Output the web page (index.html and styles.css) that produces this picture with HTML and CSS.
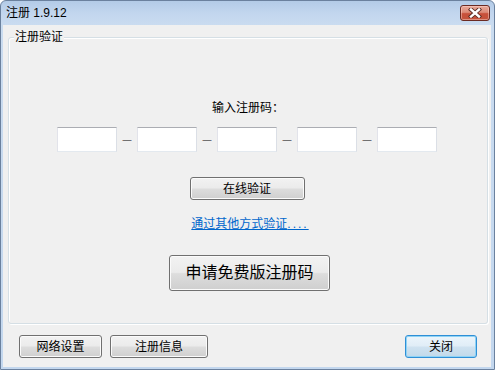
FILE: index.html
```html
<!DOCTYPE html>
<html lang="zh-CN">
<head>
<meta charset="utf-8">
<title>注册 1.9.12</title>
<link rel="stylesheet" href="styles.css">
</head>
<body>
<div class="window">
  <div class="titlebar">
    <span class="title">注册 1.9.12</span>
    <button class="close-btn" aria-label="关闭">
      <svg width="14" height="10" viewBox="0 0 14 10">
        <path d="M3 1.5 L11 8.5 M11 1.5 L3 8.5" stroke="#5b2a22" stroke-width="4.2" stroke-linecap="square" fill="none"/>
        <path d="M3 1.5 L11 8.5 M11 1.5 L3 8.5" stroke="#ffffff" stroke-width="2.4" stroke-linecap="square" fill="none"/>
      </svg>
    </button>
  </div>
  <div class="client">
    <div class="group">
      <span class="group-label">注册验证</span>
      <div class="prompt">输入注册码：</div>
      <div class="code-row">
        <input class="code" type="text">
        <span class="dash">—</span>
        <input class="code" type="text">
        <span class="dash">—</span>
        <input class="code" type="text">
        <span class="dash">—</span>
        <input class="code" type="text">
        <span class="dash">—</span>
        <input class="code" type="text">
      </div>
      <button class="btn btn-verify">在线验证</button>
      <a class="link" href="#">通过其他方式验证<span class="dots">....</span></a>
      <button class="btn btn-big">申请免费版注册码</button>
    </div>
    <div class="footer">
      <button class="btn btn-net">网络设置</button>
      <button class="btn btn-info">注册信息</button>
      <span class="spacer"></span>
      <button class="btn btn-default btn-close">关闭</button>
    </div>
  </div>
</div>
</body>
</html>
```
FILE: styles.css
```css
html, body {
  margin: 0;
  padding: 0;
  background: #ffffff;
}
body {
  font-family: "Liberation Sans", "Noto Sans CJK SC", sans-serif;
  font-size: 12px;
  color: #000;
}
.window {
  width: 495px;
  height: 370px;
  box-sizing: border-box;
  border: 1px solid #6b819e;
  border-radius: 6px 6px 0 0;
  background: linear-gradient(#b3cbe7 0px, #c2d6ee 12px, #cadcf0 24px, #c3d7ee 100%);
  padding: 0 3px 2px 2px;
  display: flex;
  flex-direction: column;
}
.titlebar {
  height: 24px;
  display: flex;
  align-items: center;
  justify-content: space-between;
  padding-left: 3px;
  flex: none;
}
.title {
  font-size: 12px;
  line-height: 16px;
  color: #000;
}
.close-btn {
  width: 30px;
  height: 16px;
  margin-right: 1px;
  padding: 0;
  border: 1px solid #6b2a22;
  border-radius: 3px;
  background: linear-gradient(#e9a899 0%, #dc8b78 45%, #c8503a 55%, #c3533c 100%);
  box-shadow: inset 0 0 0 1px rgba(255, 220, 210, 0.45);
  display: flex;
  align-items: center;
  justify-content: center;
}
.client {
  flex: 1;
  background: #f0f0f0;
  display: flex;
  flex-direction: column;
}
.group {
  position: relative;
  margin: 12px 3px 0 5px;
  height: 287px;
  box-sizing: border-box;
  border: 1px solid #d5dfe5;
  border-radius: 3px;
  box-shadow: inset 1px 1px 0 #ffffff, 1px 1px 0 #ffffff;
  display: flex;
  flex-direction: column;
  align-items: center;
  padding-top: 62px;
}
.group-label {
  position: absolute;
  left: 5px;
  top: -9px;
  padding: 0 1px;
  background: #f0f0f0;
  line-height: 16px;
}
.prompt {
  line-height: 16px;
  height: 16px;
}
.code-row {
  margin-top: 11px;
  margin-right: 2px;
  display: flex;
  align-items: center;
}
.code {
  width: 60px;
  height: 25px;
  box-sizing: border-box;
  margin: 0;
  padding: 0 3px;
  border: 1px solid;
  border-color: #abadb3 #dbdfe6 #e3e9ef #e2e3ea;
  background: #ffffff;
  font: inherit;
}
.dash {
  width: 20px;
  height: 25px;
  text-align: center;
  font-family: "Liberation Sans", sans-serif;
  font-size: 9px;
  line-height: 27px;
  color: #000;
}
.btn {
  font: inherit;
  font-size: 12px;
  color: #000;
  border: 1px solid #707070;
  border-radius: 3px;
  background: linear-gradient(#f2f2f2 0%, #ebebeb 48%, #dddddd 52%, #cfcfcf 100%);
  box-shadow: inset 0 0 0 1px #fbfbfb;
  padding: 0;
  box-sizing: border-box;
  line-height: 16px;
}
.btn-verify {
  margin-top: 25px;
  margin-right: 2px;
  width: 115px;
  height: 23px;
}
.link {
  margin-top: 16px;
  margin-left: 4px;
  line-height: 16px;
  color: #0066cc;
  text-decoration: underline;
}
.dots {
  letter-spacing: 2px;
}
.btn-big {
  margin-top: 23px;
  margin-left: 3px;
  width: 161px;
  height: 36px;
  font-size: 16px;
  line-height: 20px;
}
.footer {
  margin: 11px 14px 0 16px;
  display: flex;
  align-items: center;
  gap: 8px;
}
.spacer {
  flex: 1;
}
.btn-net {
  width: 83px;
  height: 23px;
}
.btn-info {
  width: 98px;
  height: 23px;
}
.btn-close {
  width: 72px;
  height: 23px;
}
.btn-default {
  border-color: #2f8fd6;
  background: linear-gradient(#ecf5fb 0%, #e0edf7 48%, #cfe2f0 52%, #c1d9ea 100%);
  box-shadow: inset 0 0 0 1px #8fd3f5;
}
```
